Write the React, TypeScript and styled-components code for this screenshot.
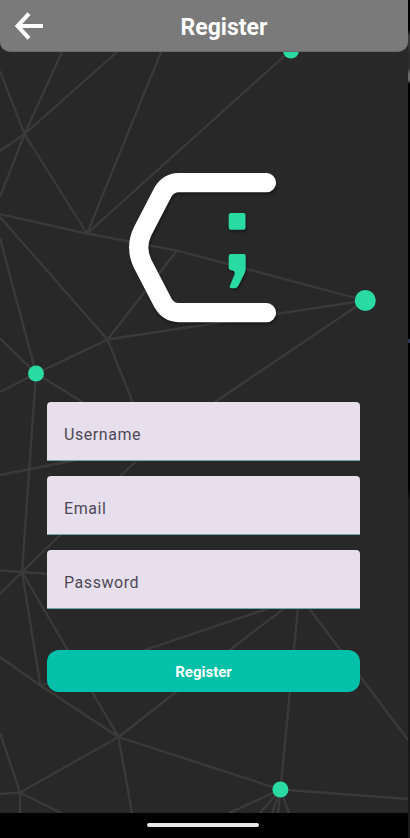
import React from "react";
import styled, { createGlobalStyle } from "styled-components";

const GlobalStyle = createGlobalStyle`
  * { box-sizing: border-box; }
  body { margin: 0; background: #000; font-family: Roboto, sans-serif; }
`;

const Phone = styled.div`
  width: 410px;
  height: 838px;
  padding-right: 2px;
  display: flex;
  flex-direction: column;
  background: linear-gradient(
    #000 30px, #3c3c3c 36px, #2c2c2c 56px, #2c2c2c 68px, #6a6a6a 74px, #6a6a6a 80px,
    #000 84px, #000 339px, #2b3555 339px, #2b3555 343px, #000 343px, #000 488px,
    #141414 500px, #1a1a1a
  ) right / 2px 100% no-repeat #000;
  overflow: hidden;
`;

const Screen = styled.div`
  position: relative;
  isolation: isolate;
  height: 813px;
  display: flex;
  flex-direction: column;
  background: #282828;
`;

const Backdrop = styled.svg`
  position: absolute;
  inset: 0;
  z-index: -1;
`;

const Header = styled.header`
  height: 52px;
  flex: none;
  display: grid;
  grid-template-columns: 40px 1fr;
  align-items: center;
  background: #7a7a7a;
  border-bottom: 1px solid #696969;
  border-radius: 0 0 10px 10px;
`;

const BackButton = styled.button`
  height: 51px;
  padding: 0 0 0 15px;
  border: 0;
  background: none;
  svg { display: block; }
`;

const Title = styled.h1`
  margin: 5px 0 0;
  text-align: center;
  font-size: 23px;
  line-height: 28px;
  font-weight: 700;
  color: #fff;
`;

const LogoArea = styled.div`
  display: flex;
  height: 350px;
  flex: none;
  padding: 114px 0 0 122px;
`;

const Form = styled.form`
  width: 313px;
  margin-left: 47px;
  display: flex;
  flex-direction: column;
  gap: 15px;
`;

const Field = styled.label`
  height: 59px;
  padding: 6px 17px 0;
  display: flex;
  align-items: center;
  background: #e7dfec;
  border-bottom: 1px solid #6fa8a4;
  border-radius: 4px 4px 0 0;
  font-size: 16px;
  letter-spacing: 0.56px;
  color: #4e4957;
`;

const Submit = styled.button`
  height: 42px;
  margin-top: 26px;
  padding: 2px 0 0;
  border: 0;
  border-radius: 12px;
  background: #03c0a8;
  color: #fff;
  font: 700 15px Roboto, sans-serif;
`;

const NavBar = styled.div`
  height: 25px;
  flex: none;
  display: flex;
  justify-content: center;
  padding-top: 10px;
  background: #000;
`;

const HomeHandle = styled.div`
  width: 112px;
  height: 4px;
  margin-right: 2px;
  border-radius: 2px;
  background: #e8e8e8;
`;

const edges = [
  "M0 71L24.5 134L62 52M24.5 134L117 52M0 151L24.5 134L0 197M24.5 134L87 233.5",
  "M161 52L87 233.5L291 50M0 214L87 233.5L177 250.5L365 300.5",
  "M0 217L107.5 339.5M0 238L36 373.5L107.5 339.5L177 250.5M107.5 339.5L365 300.5L215 402",
  "M107.5 339.5L133 403M0 338.5L36 373.5L0 392M36 373.5L84 403M36 373.5L22 572",
  "M0 475L76 460M137 460L22 572L0 570.5M22 572L50 574M0 593.5L22 572L40.5 685.5",
  "M22 572L118.5 737M0 657L40.5 685.5L118.5 737L20 792.5L0 733M40.5 685.5L293 600",
  "M118.5 737L231 649L299 597L280.5 789.5M299 595L408 740M118.5 737L132 813",
  "M118.5 737L280.5 789.5L408 799M0 794L20 792.5V813M20 792.5L61 813",
  "M229 813L280.5 789.5L260 813M280.5 789.5L272 813M280.5 789.5L278 813M280.5 789.5L289 813",
];

const dots = [
  { x: 291, y: 50.5, r: 8 },
  { x: 365.3, y: 300.5, r: 10.5 },
  { x: 36, y: 373.5, r: 8 },
  { x: 280.4, y: 789.5, r: 8 },
];

const Network = () => (
  <Backdrop width="408" height="813" viewBox="0 0 408 813">
    <path d={edges.join("")} fill="none" stroke="#3a3a3a" strokeWidth="2.300" />
    {dots.map((d) => (
      <circle key={d.y} cx={d.x} cy={d.y} r={d.r} fill="#29daa3" />
    ))}
  </Backdrop>
);

const Shadowed = styled.svg`
  overflow: visible;
  filter: drop-shadow(1px 2px 1.5px rgba(0, 0, 0, 0.4));
`;

const Logo = () => (
  <Shadowed width="160" height="166" viewBox="122 166 160 166">
    <path
      d="M266.500 182.700H178.500Q168.500 183 163 192L142.500 231.500C137.500 242 137.500 253 142.500 263.500L163 303Q168.500 312.400 178.500 312.700H266.500"
      fill="none"
      stroke="#fff"
      strokeWidth="19.200"
      strokeLinecap="round"
      strokeLinejoin="round"
    />
    <rect x="228.700" y="213" width="16.800" height="16.800" rx="2" fill="#29daa3" />
    <path
      d="M231 254H243.700Q245.700 254 245.700 256V268.500Q245.700 271 244.500 273.500L238.500 285.500Q237 288.300 234.500 288.300H231.500Q229 288.300 230 285.500L234.500 274.500Q235.300 271 232.500 270.500Q228.700 270.200 228.700 267.500V256Q228.700 254 231 254Z"
      fill="#29daa3"
    />
  </Shadowed>
);

export default function App() {
  return (
    <>
      <GlobalStyle />
      <Phone>
        <Screen>
          <Network />
          <Header>
            <BackButton aria-label="Back">
              <svg width="28" height="28" viewBox="0 0 28 28" fill="none" stroke="#fff" strokeWidth="4.100">
                <path d="M28 14H3M14 1.600L2.500 14L14 26.400" />
              </svg>
            </BackButton>
            <Title>Register</Title>
          </Header>
          <LogoArea>
            <Logo />
          </LogoArea>
          <Form>
            <Field>Username</Field>
            <Field>Email</Field>
            <Field>Password</Field>
            <Submit type="button">Register</Submit>
          </Form>
        </Screen>
        <NavBar>
          <HomeHandle />
        </NavBar>
      </Phone>
    </>
  );
}
